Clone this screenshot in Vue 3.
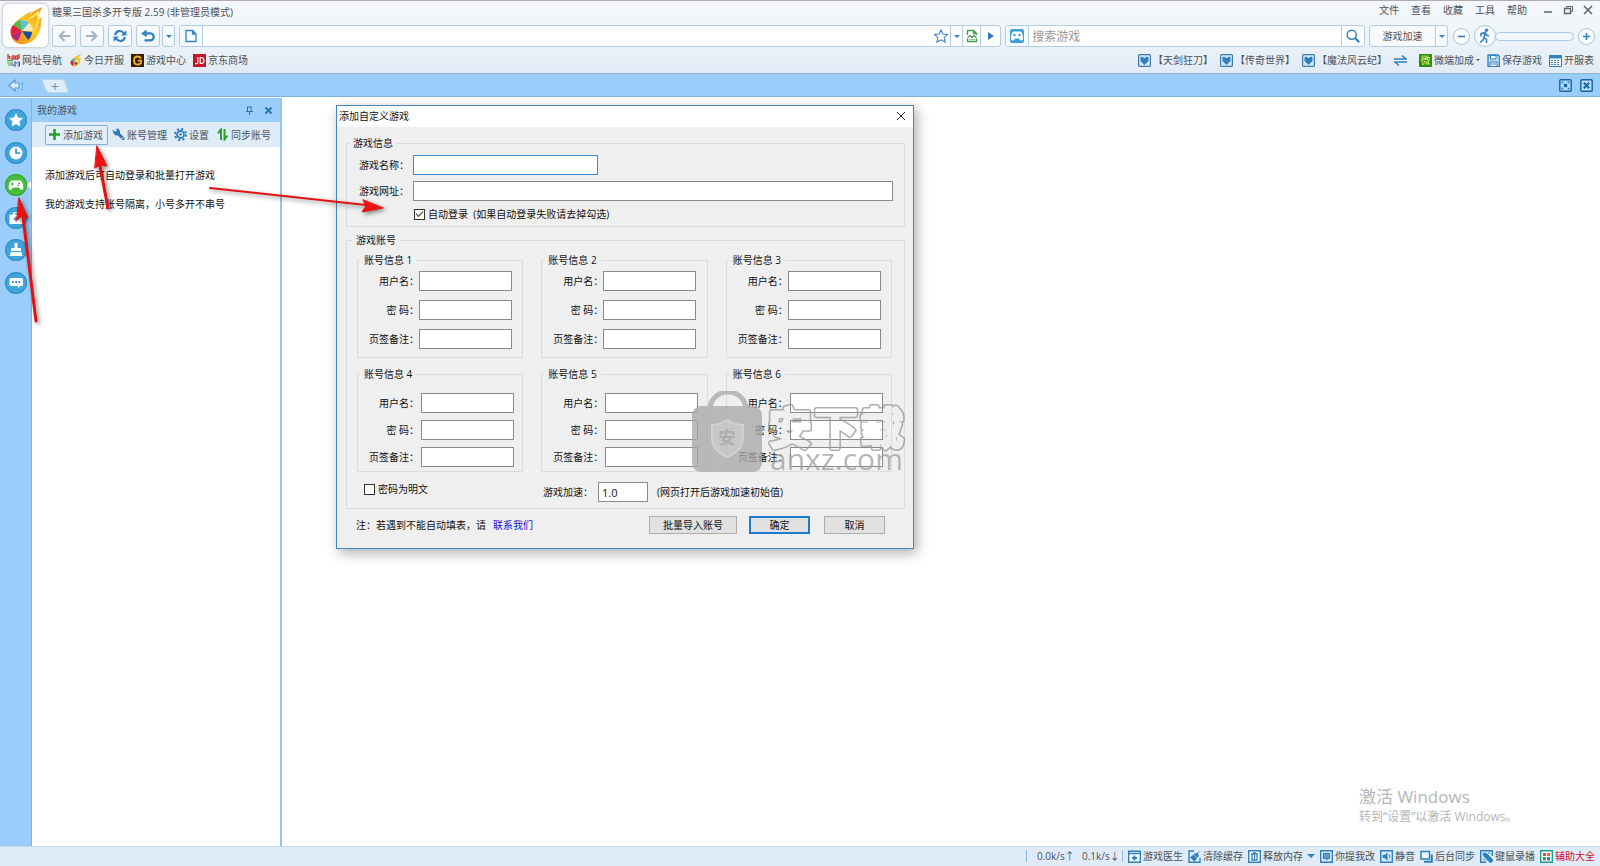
<script setup>
import { reactive, ref } from 'vue'

const menus = ['文件', '查看', '收藏', '工具', '帮助']
const bookmarks = [
  { icon: 'hao', label: '网址导航' },
  { icon: 'flame', label: '今日开服' },
  { icon: 'gold', label: '游戏中心' },
  { icon: 'jd', label: '京东商场' }
]
const hotGames = ['【天剑狂刀】', '【传奇世界】', '【魔法风云纪】']
const rail = [
  { icon: 'r-star', label: '收藏夹' },
  { icon: 'r-clock', label: '历史' },
  { icon: 'r-pad', label: '我的游戏', active: true },
  { icon: 'r-kit', label: '医生' },
  { icon: 'r-broom', label: '清理' },
  { icon: 'r-chat', label: '反馈' }
]
const panelTools = [
  { icon: 'plus', label: '添加游戏', boxed: true },
  { icon: 'wrench', label: '账号管理' },
  { icon: 'gear', label: '设置' },
  { icon: 'sync', label: '同步账号' }
]
const statusItems = [
  { icon: 's-doctor', label: '游戏医生' },
  { icon: 's-clean', label: '清除缓存' },
  { icon: 's-trash', label: '释放内存', caret: true },
  { icon: 's-note', label: '你提我改' },
  { icon: 's-mute', label: '静音' },
  { icon: 's-tabs', label: '后台同步' },
  { icon: 's-rec', label: '键鼠录播' },
  { icon: 's-grid', label: '辅助大全', hot: true }
]
const fields = [
  { key: 'user', label: '用户名：' },
  { key: 'pass', label: '密 码：' },
  { key: 'note', label: '页签备注：' }
]
const accounts = reactive([1, 2, 3, 4, 5, 6].map((n) => ({ n, user: '', pass: '', note: '' })))
const form = reactive({ name: '', url: '', autoLogin: true, plain: false, speed: '1.0' })
const address = ref('')
const query = ref('')
</script>

<template>
  <div class="app">
    <svg class="defs" aria-hidden="true">
      <defs>
        <linearGradient id="fire" x1="1" y1="0" x2="0" y2="1">
          <stop offset="0" stop-color="#f08a10" />
          <stop offset=".45" stop-color="#ffc928" />
          <stop offset="1" stop-color="#f0860c" />
        </linearGradient>
      </defs>
      <symbol id="flame" viewBox="0 0 36 40">
        <path d="M34 1c-4 3-9 3-12 8 0-2 2-4 2-4C13 10 4 17 3 26c-1 8 6 13 13 12 9-1 15-8 16-15 2-5 0-8 2-11-2 0-4 1-4 2 0-4 2-8 4-13z" fill="url(#fire)" />
        <path d="M31 4c-4 3-8 8-12 9 4 0 8-2 10-4 0 5 0 11-4 17 6-6 7-12 6-22z" fill="#ffe56a" />
        <g transform="translate(14 25)">
          <path d="M0 0L-9-5A11 11 0 0 1-2-11z" fill="#58b947" />
          <path d="M0 0L-2-11A11 11 0 0 1 7-8z" fill="#5cc2d8" />
          <path d="M0 0L7-8A11 11 0 0 1 11 0z" fill="#f4e9c0" />
          <path d="M0 0L10 1A11 11 0 0 1 6 9z" fill="#174f9c" />
          <path d="M0 0L5 9A11 11 0 0 1-4 9z" fill="#ef9a2a" />
          <path d="M0 0L-4 10A11 11 0 0 1-11 4z" fill="#b3247a" />
          <path d="M0 0L-11 4A11 11 0 0 1-9-6z" fill="#e5203a" />
        </g>
      </symbol>
      <symbol id="back" viewBox="0 0 16 16"><path d="M15 8H3M8.500 2.500L3 8l5.500 5.500" fill="none" stroke="#a3b2c0" stroke-width="2.400" /></symbol>
      <symbol id="forward" viewBox="0 0 16 16"><path d="M1 8h12M7.500 2.500L13 8l-5.500 5.500" fill="none" stroke="#a3b2c0" stroke-width="2.400" /></symbol>
      <symbol id="refresh" viewBox="0 0 16 16"><path d="M2.500 7C3 1.500 10 1 12.500 5M13.500 9C13 14.500 6 15 3.500 11" fill="none" stroke="#3381bd" stroke-width="2.400" /><path d="M15.300 1.500v6H9zM.7 14.500v-6H7z" fill="#3381bd" /></symbol>
      <symbol id="undo" viewBox="0 0 16 16"><path d="M4 5h6.500a3.700 3.700 0 0 1 0 8H4" fill="none" stroke="#3381bd" stroke-width="2.600" /><path d="M0 5l6.500-4.500v9z" fill="#3381bd" /></symbol>
      <symbol id="page" viewBox="0 0 12 14"><path d="M1 1.500h6.500l3.500 3.500v7.500H1zM7.500 1.500V5H11" fill="none" stroke="#3381bd" stroke-width="1.300" /></symbol>
      <symbol id="star" viewBox="0 0 14 14"><path d="M7 .8l1.900 4.200 4.600.5-3.400 3.100 1 4.500L7 10.800l-4.100 2.300 1-4.500L.5 5.500 5.100 5z" fill="#fff" stroke="#3f82c6" stroke-width="1.100" /></symbol>
      <symbol id="leaf" viewBox="0 0 12 14"><path d="M1.500 6V1.500h6l3 3V6M7.500 1.500v3h3M1.500 9.500v3h9v-3M1.500 8.500L4 6.500l2 2 2-2 2.500 2" fill="none" stroke="#469b43" stroke-width="1.300" /><path d="M3 10.500h6" stroke="#8cc48a" /></symbol>
      <symbol id="pad" viewBox="0 0 14 14"><rect width="14" height="14" rx="2" fill="#3d9fd3" /><path d="M4 2.500h6c2 0 3 3 3 7.500-1 2.500-3 1.500-4-.5H5c-1 2-3 3-4 .5 0-4.500 1-7.500 3-7.500z" fill="#fff" /><circle cx="4.500" cy="6" r="1.200" fill="#3d93c9" /><circle cx="9.500" cy="6" r="1.200" fill="#3d93c9" /></symbol>
      <symbol id="search" viewBox="0 0 14 14"><circle cx="5.700" cy="5.700" r="4.500" fill="none" stroke="#3381bd" stroke-width="1.500" /><path d="M9 9l4.200 4.200" stroke="#3381bd" stroke-width="2.200" /></symbol>
      <symbol id="run" viewBox="0 0 12 16"><circle cx="7.500" cy="2.200" r="1.700" fill="#3381bd" /><path d="M2 8.500V5.500l4-1 1.500 2.500 2.500 1M6 5l-1 4.500 2.500 2v3.500M5 9.500L4 12l-3 2.500" fill="none" stroke="#3381bd" stroke-width="1.600" /></symbol>
      <symbol id="hao" viewBox="0 0 13 13"><path d="M1 0v5M1 3q2-2 2 2M5 2v3h2V2H5M8.500 2v3h2V2h-2M12 0v5" fill="none" stroke="#d53a3a" stroke-width="1.300" /><path d="M0 6.500h6" stroke="#4ba54b" stroke-width="1.500" /><path d="M8 6h5M0 8h4v4H1z" fill="#93cf8f" /><path d="M5 8v4M7 8h2v2H7v2h2M10.500 8h2v4h-2M10.500 10h2" fill="none" stroke="#4b51a8" /></symbol>
      <symbol id="gold" viewBox="0 0 13 13"><rect width="13" height="13" fill="#3c1b05" /><path d="M10 4.500Q9 2.500 6.500 2.500 3 2.500 3 6.500t3.500 4Q9 10.500 10 9V6.700H6.800" fill="none" stroke="#efb52c" stroke-width="1.800" /></symbol>
      <symbol id="jd" viewBox="0 0 13 13"><rect width="13" height="13" fill="#c71427" /><path d="M4.800 3v5.300Q4.800 10 2 9.600M7.200 3.500v6h1.300q2.500-.3 2.500-3t-2.500-3z" fill="none" stroke="#fff" stroke-width="1.200" /></symbol>
      <symbol id="heart" viewBox="0 0 13 13"><rect x=".6" y=".6" width="11.800" height="11.800" rx="1" fill="#d3e9f9" stroke="#3c7bab" stroke-width="1.200" /><path d="M6.500 11L2.500 7V3.500L4 2.500l2.500 1.700L9 2.500l1.500 1V7z" fill="#2f7fbd" /></symbol>
      <symbol id="swap" viewBox="0 0 13 13"><path d="M0 5h12L8 1.500M13 8H1l4 3.500" fill="none" stroke="#3381bd" stroke-width="1.600" /></symbol>
      <symbol id="save" viewBox="0 0 13 13"><path d="M1 1h10l1.500 1.500V12.500H1z" fill="#b9d9f0" stroke="#3381bd" stroke-width="1.300" /><path d="M3.500 1.500h5.500v3.500H3.500zM3 8h7v4.500H3z" fill="#fff" stroke="#3381bd" /><path d="M4 10h5" stroke="#3381bd" /></symbol>
      <symbol id="sheet" viewBox="0 0 13 13"><path d="M.5 1.500h12v11H.5z" fill="#fff" stroke="#3381bd" /><path d="M0 1h13v3.500H0z" fill="#3381bd" /><path d="M2 6.500h9M2 8.500h9M2 10.500h9" stroke="#3381bd" stroke-dasharray="2 1" /></symbol>
      <symbol id="collapse" viewBox="0 0 16 13"><path d="M1 6.500L7 1v3h4v5H7v3zM12.500 10.500h1.800V3" fill="#d8ecfb" stroke="#5d9cca" stroke-width="1.100" /></symbol>
      <symbol id="full" viewBox="0 0 13 13"><rect x=".8" y=".8" width="11.400" height="11.400" rx="1" fill="#b7ddf8" stroke="#16699f" stroke-width="1.500" /><path d="M4.800 4.800h3.400v3.400H4.800z" fill="#16699f" /><path d="M3 4.500V3h1.500M8.500 3H10v1.500M10 8.500V10H8.500M4.500 10H3V8.500" fill="none" stroke="#16699f" /></symbol>
      <symbol id="closebox" viewBox="0 0 13 13"><rect x=".8" y=".8" width="11.400" height="11.400" rx="1" fill="#b7ddf8" stroke="#16699f" stroke-width="1.500" /><path d="M3.800 3.800l5.400 5.400M9.200 3.800L3.800 9.200" stroke="#16699f" stroke-width="2" /></symbol>
      <symbol id="r-star" viewBox="0 0 22 22"><path d="M11 4l2.100 4.500 5 .6-3.700 3.400 1 4.900L11 15l-4.400 2.400 1-4.900-3.700-3.400 5-.6z" fill="#fff" /></symbol>
      <symbol id="r-clock" viewBox="0 0 22 22"><circle cx="11" cy="11" r="6.500" fill="#fff" /><path d="M11 6.500V11h4" fill="none" stroke="#2f8dca" stroke-width="1.600" /></symbol>
      <symbol id="r-pad" viewBox="0 0 22 22"><path d="M7 6.500h8c2 0 3.500 4 3.300 7.500-.3 3-2.800 2-4.300-.5H8C6.500 16 4 17 3.700 14 3.500 10.500 5 6.500 7 6.500z" fill="#fff" /><path d="M7.500 8.500v3M6 10h3" stroke="#3fae3c" /><circle cx="14" cy="9.500" r="1" fill="#3fae3c" /><circle cx="13" cy="11.500" r=".8" fill="#3fae3c" /></symbol>
      <symbol id="r-kit" viewBox="0 0 22 22"><path d="M4.500 7.500H8V5h6v2.500h3.500V17h-13zM9.500 6.300v1.200h3V6.300z" fill="#fff" /><path d="M11 9.500v5M8.500 12h5" stroke="#2f8dca" stroke-width="1.600" /></symbol>
      <symbol id="r-broom" viewBox="0 0 22 22"><path d="M9.500 4h3v5h3.500v3H6V9h3.500zM5.800 13h10.400l1.300 4h-13z" fill="#fff" /></symbol>
      <symbol id="r-chat" viewBox="0 0 22 22"><path d="M6 6h10.500q1.500 0 1.500 1.500v5q0 1.500-1.500 1.500H15l-2 2.500V14H6q-1.500 0-1.500-1.500v-5Q4.500 6 6 6z" fill="#fff" /><path d="M7 10h8.500" stroke="#2f8dca" stroke-width="1.800" stroke-dasharray="1.800 1.400" /></symbol>
      <symbol id="plus" viewBox="0 0 13 13"><path d="M6.500 1v11M1 6.500h11" stroke="#25a02b" stroke-width="2.600" /></symbol>
      <symbol id="wrench" viewBox="0 0 13 13"><path d="M.5 1.500L3 3.800 4.800 3 4.500.5Q8 .5 8 4v1.200l4.500 4.800q.5 2.200-2 2.300L6 7.500Q1 8 .5 1.500z" fill="#2f7ab5" /><circle cx="10.300" cy="10.300" r=".8" fill="#dfecf8" /></symbol>
      <symbol id="gear" viewBox="0 0 13 13"><circle cx="6.500" cy="6.500" r="5.500" fill="none" stroke="#3381bd" stroke-width="2" stroke-dasharray="2.200 2.120" /><circle cx="6.500" cy="6.500" r="3.500" fill="none" stroke="#3381bd" stroke-width="1.800" /><circle cx="6.500" cy="6.500" r="1.200" fill="#3381bd" /></symbol>
      <symbol id="sync" viewBox="0 0 13 13"><path d="M5 12V1.500L2 5.500M8.500 1v10.500l3-4" fill="none" stroke="#25a02b" stroke-width="2" /></symbol>
      <symbol id="pin" viewBox="0 0 9 9"><path d="M2.500 1v4.500M6 1v4.500M2 1h5M1 5.500h7M4.500 5.500V9" fill="none" stroke="#2874ae" /></symbol>
      <symbol id="s-doctor" viewBox="0 0 13 13"><path d="M.7 1.200h11.600v11H.7z" fill="#fff" stroke="#2f7fbd" stroke-width="1.400" /><path d="M1 3.500h11" stroke="#2f7fbd" stroke-width="1.500" /><path d="M6.500 5.500v5M4 8h5" stroke="#2f7fbd" stroke-width="1.800" /></symbol>
      <symbol id="s-clean" viewBox="0 0 13 13"><path d="M6 1H1v11.300h11V8" fill="none" stroke="#2f7fbd" stroke-width="1.400" /><path d="M13 .5L9.800 3.500l1.200 2.500-4.500 5.500L2 7.500 7.500 3l1 .3z" fill="#2f7fbd" /><path d="M6 5l4 3" stroke="#dceaf6" stroke-width=".7" /></symbol>
      <symbol id="s-trash" viewBox="0 0 13 13"><path d="M.7.700h11.600v11.600H.7z" fill="#fff" stroke="#2f7fbd" stroke-width="1.400" /><path d="M3 4h7M5 2.800h3M4 4.500v5.700h5V4.500M6.500 5v5" fill="none" stroke="#2f7fbd" stroke-width="1.300" /></symbol>
      <symbol id="s-note" viewBox="0 0 13 13"><path d="M.7.700h11.600v11.600H.7z" fill="#d8ebf8" stroke="#2f7fbd" stroke-width="1.400" /><path d="M3 3h7v6H8l-1.500 2V9H3z" fill="#2f7fbd" /><path d="M4 5h5M4 7h5" stroke="#b4daf2" stroke-width=".7" /></symbol>
      <symbol id="s-mute" viewBox="0 0 13 13"><path d="M.7.700h11.600v11.600H.7z" fill="#d8ebf8" stroke="#2f7fbd" stroke-width="1.400" /><path d="M2.500 5h2l3-2.500v8L4.500 8h-2z" fill="#2f7fbd" /><path d="M9 4.500q1.500 2 0 4" fill="none" stroke="#2f7fbd" /></symbol>
      <symbol id="s-tabs" viewBox="0 0 13 13"><path d="M1 1.500h8.500V9H1z" fill="#e9f4fb" stroke="#2f7fbd" stroke-width="1.500" /><path d="M11.800 4.500v7.300H4" fill="none" stroke="#2f7fbd" stroke-width="2" /></symbol>
      <symbol id="s-rec" viewBox="0 0 13 13"><path d="M6 12.300H.7V.7h11.600V6" fill="#d8ebf8" stroke="#2f7fbd" stroke-width="1.400" /><path d="M3 3.500Q5 2.500 7 4l5.500 5.500q.5 3-2.500 3L4.500 7Q3 5.500 3 3.500zM3 8.500l2.500 2.500M8 3h2" fill="#2f7fbd" stroke="#2f7fbd" /></symbol>
      <symbol id="s-grid" viewBox="0 0 13 13"><path d="M.7.700h11.600v11.600H.7z" fill="#fff" stroke="#1e9c93" stroke-width="1.400" /><path d="M3 3h3v3H3z" fill="#e04a3c" /><path d="M7 3h3v3H7z" fill="#e5674f" /><path d="M3 7h3v3.500H3z" fill="#4aa04a" /><path d="M7 7h3v3.500H7z" fill="#2f7fbd" /></symbol>
    </svg>

    <header class="header">
      <div class="top">
        <div class="logo"><svg width="36" height="40"><use href="#flame" /></svg></div>
        <div class="top-main">
          <div class="titlebar">
            <h1 class="title">糖果三国杀多开专版 2.59 (非管理员模式)</h1>
            <nav class="menu"><button v-for="m in menus" :key="m" type="button">{{ m }}</button></nav>
            <div class="winbtns">
              <button type="button" aria-label="最小化"><svg width="10" height="10"><path d="M1 7h8" stroke="#5b6067" stroke-width="1.500" /></svg></button>
              <button type="button" aria-label="还原"><svg width="10" height="10" fill="none" stroke="#5b6067"><path d="M1.500 3.500h6v5h-6z" stroke-width="1.300" /><path d="M3.500 3V1.500h6v5H8" /></svg></button>
              <button type="button" aria-label="关闭"><svg width="10" height="10"><path d="M1 1l8 8M9 1L1 9" stroke="#5b6067" stroke-width="1.500" /></svg></button>
            </div>
          </div>
          <div class="toolbar">
            <button class="tool" type="button" aria-label="后退"><svg width="14" height="14"><use href="#back" /></svg></button>
            <button class="tool" type="button" aria-label="前进"><svg width="14" height="14"><use href="#forward" /></svg></button>
            <button class="tool" type="button" aria-label="刷新"><svg width="14" height="14"><use href="#refresh" /></svg></button>
            <div class="split">
              <button class="tool" type="button" aria-label="恢复"><svg width="14" height="14"><use href="#undo" /></svg></button>
              <button class="tool slim" type="button" aria-label="恢复列表"><i class="caret"></i></button>
            </div>
            <div class="box address">
              <span class="cell wide first"><svg width="12" height="14"><use href="#page" /></svg></span>
              <input v-model="address" aria-label="地址" />
              <button class="cell bare" type="button" aria-label="收藏"><svg width="14" height="14"><use href="#star" /></svg></button>
              <button class="cell drop" type="button" aria-label="收藏列表"><i class="caret"></i></button>
              <button class="cell mid" type="button" aria-label="兼容模式"><svg width="12" height="14"><use href="#leaf" /></svg></button>
              <button class="cell go" type="button" aria-label="转到"><svg width="6" height="8"><path d="M0 0l6 4-6 4z" fill="#2f7fbd" /></svg></button>
            </div>
            <div class="box search">
              <span class="cell wide first"><svg width="14" height="14"><use href="#pad" /></svg></span>
              <input v-model="query" aria-label="搜索游戏" placeholder="搜索游戏" />
              <button class="cell wide" type="button" aria-label="搜索"><svg width="14" height="14"><use href="#search" /></svg></button>
            </div>
            <div class="box speed">
              <button class="speed-label" type="button">游戏加速</button>
              <button class="cell drop" type="button" aria-label="加速选项"><i class="caret"></i></button>
            </div>
            <div class="slider">
              <button class="round" type="button" aria-label="减速"><svg width="9" height="9"><path d="M1 4.500h7" stroke="#3381bd" stroke-width="1.600" /></svg></button>
              <span class="runner"><svg width="12" height="16"><use href="#run" /></svg></span>
              <span class="track"></span>
              <button class="round" type="button" aria-label="加速"><svg width="9" height="9"><path d="M1 4.500h7M4.500 1v7" stroke="#3381bd" stroke-width="1.600" /></svg></button>
            </div>
          </div>
        </div>
      </div>
      <div class="bookmarks">
        <a v-for="b in bookmarks" :key="b.label" href="#" class="item"><svg width="13" height="13"><use :href="'#' + b.icon" /></svg>{{ b.label }}</a>
        <span class="grow"></span>
        <a v-for="g in hotGames" :key="g" href="#" class="item hotgame"><svg width="13" height="13"><use href="#heart" /></svg>{{ g }}</a>
        <button class="item" type="button" aria-label="换一批"><svg width="13" height="13"><use href="#swap" /></svg></button>
        <a href="#" class="item micro"><b>微</b>微端加成<i class="caret tiny"></i></a>
        <a href="#" class="item"><svg width="13" height="13"><use href="#save" /></svg>保存游戏</a>
        <a href="#" class="item"><svg width="13" height="13"><use href="#sheet" /></svg>开服表</a>
      </div>
    </header>

    <div class="tabs">
      <button type="button" aria-label="收起侧栏"><svg width="16" height="13"><use href="#collapse" /></svg></button>
      <button class="newtab" type="button" aria-label="新建标签"><svg width="28" height="16"><path d="M1 1.500h20q2 0 2.800 2l3 9q.5 2-1.500 2H8q-2 0-2.800-2l-4-10z" fill="#dcecf9" stroke="#b9d6ee" /><path d="M14 5v7M10.500 8.500h7" stroke="#7e8c98" /></svg></button>
      <span class="grow"></span>
      <button type="button" aria-label="全屏"><svg width="13" height="13"><use href="#full" /></svg></button>
      <button type="button" aria-label="关闭标签"><svg width="13" height="13"><use href="#closebox" /></svg></button>
    </div>

    <div class="body">
      <div class="rail">
        <nav>
          <button v-for="r in rail" :key="r.icon" type="button" :aria-label="r.label" :class="{ active: r.active }"><svg width="22" height="22"><use :href="'#' + r.icon" /></svg></button>
        </nav>
      </div>
      <aside class="panel">
        <div class="panel-head">
          <h2>我的游戏</h2>
          <button type="button" aria-label="固定"><svg width="9" height="9"><use href="#pin" /></svg></button>
          <button type="button" aria-label="关闭面板"><svg width="9" height="9"><path d="M1.500 1.500l6 6M7.500 1.500l-6 6" stroke="#2874ae" stroke-width="1.800" /></svg></button>
        </div>
        <div class="panel-tools">
          <button v-for="t in panelTools" :key="t.label" type="button" :class="{ boxed: t.boxed }"><svg width="13" height="13"><use :href="'#' + t.icon" /></svg>{{ t.label }}</button>
        </div>
        <div class="panel-text">
          <p>添加游戏后可自动登录和批量打开游戏</p>
          <p>我的游戏支持账号隔离，小号多开不串号</p>
        </div>
      </aside>
      <main class="page">
        <div class="activate">
          <p class="big">激活 Windows</p>
          <p>转到“设置”以激活 Windows。</p>
        </div>
      </main>
    </div>

    <footer class="status">
      <span class="bar"></span>
      <span class="rate">0.0k/s↑</span>
      <span class="rate">0.1k/s↓</span>
      <span class="bar"></span>
      <button v-for="s in statusItems" :key="s.label" type="button" class="item" :class="{ hot: s.hot }"><svg width="13" height="13"><use :href="'#' + s.icon" /></svg>{{ s.label }}<i v-if="s.caret" class="caret"></i></button>
    </footer>

    <section class="dialog" role="dialog" aria-labelledby="dlg-title">
      <div class="dlg-head">
        <h2 id="dlg-title">添加自定义游戏</h2>
        <button type="button" aria-label="关闭"><svg width="10" height="10"><path d="M1 1l8 8M9 1L1 9" stroke="#222" /></svg></button>
      </div>
      <form class="dlg-body" @submit.prevent>
        <fieldset class="info">
          <legend>游戏信息</legend>
          <div class="line"><label for="g-name">游戏名称：</label><input id="g-name" v-model="form.name" class="field name" /></div>
          <div class="line"><label for="g-url">游戏网址：</label><input id="g-url" v-model="form.url" class="field url" /></div>
          <div class="line auto"><input id="g-auto" v-model="form.autoLogin" type="checkbox" /><label for="g-auto">自动登录&nbsp; (如果自动登录失败请去掉勾选)</label></div>
        </fieldset>
        <fieldset class="accounts">
          <legend>游戏账号</legend>
          <div class="grid">
            <fieldset v-for="a in accounts" :key="a.n" class="account" :class="{ lower: a.n > 3 }">
              <legend>账号信息 {{ a.n }}</legend>
              <div v-for="f in fields" :key="f.key" class="row">
                <label :for="f.key + a.n">{{ f.label }}</label>
                <input :id="f.key + a.n" v-model="a[f.key]" class="field" />
              </div>
            </fieldset>
          </div>
          <div class="options">
            <span class="plain"><input id="g-plain" v-model="form.plain" type="checkbox" /><label for="g-plain">密码为明文</label></span>
            <label class="speed-name" for="g-speed">游戏加速：</label>
            <input id="g-speed" v-model="form.speed" class="field speed-value" />
            <span class="hint">(网页打开后游戏加速初始值)</span>
          </div>
        </fieldset>
        <div class="dlg-foot">
          <p>注：若遇到不能自动填表，请<a href="#">联系我们</a></p>
          <button class="btn import" type="button">批量导入账号</button>
          <button class="btn primary" type="submit">确定</button>
          <button class="btn" type="button">取消</button>
        </div>
      </form>
      <svg class="stamp" width="216" height="88" viewBox="0 0 216 88" aria-hidden="true">
        <defs>
          <mask id="outline">
            <g font-size="43" font-weight="700" text-anchor="middle" stroke-linejoin="round">
              <g fill="#fff" stroke="#fff" stroke-width="6"><text x="98" y="53">安</text><text x="144" y="53">下</text><text x="190" y="53">载</text></g>
              <g fill="#000" stroke="#000" stroke-width="3"><text x="98" y="53">安</text><text x="144" y="53">下</text><text x="190" y="53">载</text></g>
            </g>
          </mask>
        </defs>
        <g opacity=".78">
          <path d="M18 18a18 17 0 0 1 36 0" fill="none" stroke="#aaa" stroke-width="5" />
          <rect x="0" y="15" width="70" height="66" rx="9" fill="#a9a9a9" />
          <path d="M35 29q8 5 16 5v12q0 14-16 20-15-6-15-20V34q8 0 15-5z" fill="#bcbcbc" stroke="#c9c9c9" stroke-width="2" />
          <text x="35" y="53" font-size="17" font-weight="700" text-anchor="middle" fill="#9c9c9c">安</text>
          <rect x="70" y="8" width="146" height="54" fill="#999" mask="url(#outline)" />
          <text x="78" y="79" font-size="30" fill="#a2a2a2">anxz.com</text>
        </g>
      </svg>
    </section>

    <svg class="arrows" width="400" height="340" aria-hidden="true">
      <g fill="#f01010" stroke="#e01212" stroke-linecap="round">
        <path d="M108 208L100 166" stroke-width="3" /><path d="M97 146l10 20-7-1-5 3z" />
        <path d="M210 188L366 205" stroke-width="2" /><path d="M383 208l-21 4 4-6-3-6z" />
        <path d="M36 321L23 217" stroke-width="3" /><path d="M19 198l9 20-6-2-5 4z" />
      </g>
    </svg>
  </div>
</template>

<style>
body { background: #fff; }
</style>

<style scoped>
.app {
  position: relative;
  display: flex;
  flex-direction: column;
  min-height: 100vh;
  overflow: hidden;
  background: #fff;
  color: #4c5258;
  font: 10px/14px "Open Sans", "Noto Sans CJK SC", sans-serif;
}
.app *, .app *::before { box-sizing: border-box; }
.defs { position: absolute; width: 0; height: 0; }
svg { display: block; flex: none; }
button { padding: 0; border: 0; background: none; color: inherit; font: inherit; white-space: nowrap; }
input { min-width: 0; margin: 0; padding: 0; border: 0; background: none; outline: 0; font: inherit; }
h1, h2, p { margin: 0; font: inherit; }
a { color: inherit; text-decoration: none; white-space: nowrap; }
.grow { flex: 1; }
.caret { flex: none; width: 0; height: 0; border: 3px solid transparent; border-top-color: #3381bd; border-bottom: 0; }

.header { border-top: 1px solid #adadb3; border-bottom: 1px solid #92b5cf; background: linear-gradient(#f5f7fb, #f0f5fa 40%, #e1ebf5); }
.top { display: flex; gap: 4px; padding-left: 3px; }
.logo { display: flex; align-items: center; justify-content: center; width: 45px; height: 43px; margin-top: 3px; border-radius: 5px; background: #fff; box-shadow: 0 0 3px #98a2ac; }
.top-main { flex: 1; min-width: 0; }
.titlebar { display: flex; align-items: center; height: 24px; padding: 0 7px 2px 0; }
.title { flex: 1; }
.menu { display: flex; gap: 12px; margin: -4px 16px 0 0; }
.winbtns { display: flex; gap: 10px; margin-top: -4px; }
.toolbar { display: flex; align-items: center; gap: 4px; padding-right: 5px; }
.tool { display: flex; align-items: center; justify-content: center; width: 24px; height: 22px; border: 1px solid #aecbe2; border-radius: 3px; background: linear-gradient(#fff, #f0f6fb); }
.slim { width: 13px; }
.split { display: flex; gap: 2px; }
.box { display: flex; height: 22px; border: 1px solid #b0cde4; border-radius: 3px; background: #fff; overflow: hidden; }
.box input { flex: 1; padding: 2px 3px 0; font-size: 12px; color: #555; }
.box input::placeholder { color: #999; opacity: 1; }
.cell { display: flex; flex: none; align-items: center; justify-content: center; border-left: 1px solid #b4cfe6; }
.cell.first { border-left: 0; border-right: 1px solid #b4cfe6; background: #f5fafe; }
.bare { width: 18px; border-left: 0; }
.wide { width: 23px; }
.mid { width: 18px; }
.go { width: 20px; }
.drop { width: 12px; }
.address { flex: 823; }
.search { flex: 359; }
.speed { background: #f8fbfd; }
.speed-label { width: 65px; }
.slider { display: flex; align-items: center; margin-left: 1px; }
.round { display: flex; align-items: center; justify-content: center; width: 17px; height: 17px; border: 1px solid #a6c3da; border-radius: 50%; background: #fafcfe; }
.runner { z-index: 1; display: flex; align-items: center; justify-content: center; width: 22px; height: 22px; margin-left: 4px; border: 1px solid #aac9e2; border-radius: 50%; background: #f8fbfe; }
.track { width: 79px; height: 9px; margin: 0 4px 0 -1px; border: 1px solid #aac9e2; border-radius: 5px; background: #f3f8fc; }
.bookmarks { display: flex; align-items: center; gap: 7px; height: 26px; padding: 0 6px 0 7px; }
.item { display: flex; align-items: center; gap: 2px; }
.micro { margin-left: 5px; }
.micro b { width: 13px; height: 13px; border-radius: 1px; background: #2d8c00; color: #d8f59b; font-weight: 400; line-height: 13px; text-align: center; }
.tiny { border-width: 2px; border-top-color: #555; border-bottom: 0; }

.tabs { display: flex; align-items: center; gap: 8px; height: 24px; padding: 0 7px 0 8px; border-bottom: 1px solid #fff; background: #9bcdfa; box-shadow: inset 0 -1px #80b2dc; }
.newtab { margin-left: 9px; }

.body { display: flex; flex: 1; }
.rail { width: 32px; padding: 11px 4px 11px 5px; border-right: 1px solid #7db4e0; background: #9bcdfa; }
.rail nav { display: flex; flex-direction: column; justify-content: space-between; height: 185px; }
.rail button { position: relative; width: 22px; height: 22px; border-radius: 50%; background: #3fa3dc; box-shadow: inset 0 0 0 1px #3490c9; }
.rail .active { background: #46be3c; box-shadow: inset 0 0 0 1px #35a52e; }
.active::before { content: ""; position: absolute; top: 7px; right: -4px; border: 4px solid transparent; border-left: 0; border-right-color: #fff; }
.panel { width: 250px; border-right: 2px solid #95c5ea; }
.panel-head { display: flex; align-items: center; gap: 10px; height: 24px; padding: 0 7px 0 5px; background: #9bcdfa; }
.panel-head h2 { flex: 1; }
.panel-tools { display: flex; align-items: center; gap: 7px; height: 25px; padding-left: 13px; background: #dfecf8; }
.panel-tools button { display: flex; align-items: center; gap: 2px; height: 20px; }
.panel-tools .boxed { width: 63px; margin-right: -3px; padding-left: 2px; border: 1px solid #7fb2dc; border-radius: 1px; background: #e3f0fb; }
.panel-text { display: grid; gap: 15px; padding: 21px 13px; color: #111; }
.page { display: flex; flex: 1; align-items: flex-end; justify-content: flex-end; }
.activate { width: 241px; padding-bottom: 20px; color: #b6b6b6; font-size: 12px; line-height: 18px; }
.activate .big { font-size: 17px; line-height: 22px; }

.status { display: flex; align-items: center; gap: 5px; height: 20px; padding: 0 5px 1px 0; border-top: 1px solid #c0d8ea; background: #dfebf6; justify-content: flex-end; }
.status .bar { width: 1px; height: 12px; background: #8fbbe0; }
.status .rate { width: 34px; margin: 0 1px 0 5px; }
.status .caret { margin-left: 2px; border-width: 4px; border-bottom: 0; }
.hot { color: #d8121c; }

.dialog { position: absolute; top: 105px; left: 336px; width: 578px; border: 1px solid #3f87be; background: #efefef; box-shadow: 3px 4px 12px rgba(0, 0, 0, .32); color: #111; }
.dlg-head { display: flex; align-items: center; justify-content: space-between; height: 21px; padding: 0 7px 1px 2px; background: #fff; }
.dlg-body { padding: 9px 8px 14px 9px; }
fieldset { min-width: 0; margin: 0; padding: 0; border: 1px solid #dadcdc; }
legend { height: 14px; padding: 0 4px; }
.info { height: 91px; padding-left: 12px; }
.info legend { margin-left: -10px; }
.line { display: flex; align-items: center; height: 26px; }
.line label { width: 54px; white-space: nowrap; }
.info .line:first-of-type { margin-top: 2px; }
.field { height: 20px; border: 1px solid #8a8a8a; background: #fff; color: #111; }
.name { width: 185px; border-color: #3d8bcb; }
.url { width: 480px; }
.line.auto { height: 20px; padding-left: 55px; }
.line.auto label { width: auto; }
input[type="checkbox"] { display: grid; flex: none; place-content: center; width: 11px; height: 11px; margin-right: 3px; border: 1px solid #333; background: #fff; appearance: none; }
input[type="checkbox"]:checked::before { content: ""; width: 7px; height: 4px; margin-top: -2px; border: solid #333; border-width: 0 0 1px 1px; transform: rotate(-45deg); }
.accounts { margin-top: 6px; padding-left: 10px; }
.accounts > legend { margin-left: -5px; }
.grid { display: grid; grid-template-columns: repeat(3, 1fr); gap: 9px 18px; margin-top: 6px; padding-right: 12px; }
.account { height: 105px; }
.account legend { margin-left: 2px; }
.row { display: flex; align-items: center; margin-bottom: 9px; }
.row label { width: 61px; text-align: right; white-space: nowrap; }
.row .field { width: 93px; }
.account .row:first-of-type { margin-top: 4px; }
.lower .row { gap: 2px; margin-bottom: 7px; }
.lower .row:first-of-type { margin-top: 12px; }
.options { display: flex; align-items: center; height: 36px; padding-top: 4px; }
.plain { display: flex; align-items: center; width: 179px; margin: -6px 0 0 7px; }
.speed-name { width: 55px; }
.options .speed-value { width: 50px; padding-left: 3px; font-size: 11px; }
.hint { margin-left: 9px; }
.dlg-foot { display: flex; align-items: center; padding: 7px 20px 0 10px; }
.dlg-foot p { flex: 1; }
.dlg-foot a { margin-left: 7px; color: #1c12d8; }
.btn { width: 61px; height: 18px; margin-left: 14px; border: 1px solid #adadad; background: #e1e1e1; color: #111; line-height: 14px; }
.import { width: 88px; }
.primary { margin-left: 12px; border: 2px solid #1a7ccb; line-height: 12px; }
.stamp { position: absolute; top: 285px; left: 355px; pointer-events: none; }
.arrows { position: absolute; top: 0; left: 0; pointer-events: none; filter: drop-shadow(2px 2px 2px rgba(0, 0, 0, .45)); }
</style>
